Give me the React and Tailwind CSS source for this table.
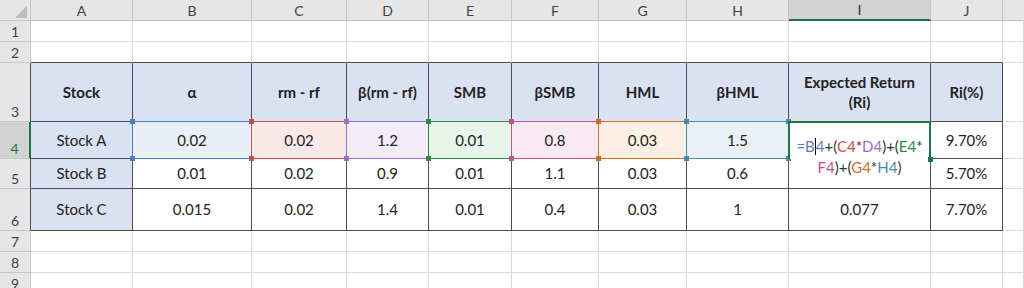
import React from 'react';

const COLS = ['A', 'B', 'C', 'D', 'E', 'F', 'G', 'H', 'I', 'J'];

const headers = ['Stock', 'α', 'rm - rf', 'β(rm - rf)', 'SMB', 'βSMB', 'HML', 'βHML', 'Expected Return\n(Ri)', 'Ri(%)'];

const rowB = ['Stock B', '0.01', '0.02', '0.9', '0.01', '1.1', '0.03', '0.6', '', '5.70%'];
const rowC = ['Stock C', '0.015', '0.02', '1.4', '0.01', '0.4', '0.03', '1', '0.077', '7.70%'];

// row 4 ranges referenced by the formula being edited
const ranges = [
  { v: '0.02', fill: 'bg-[#e9eff9]', line: 'border-[#4a7cc4]', sq: 'bg-[#4a7cc4]' },
  { v: '0.02', fill: 'bg-[#fbe9ea]', line: 'border-[#c0504d]', sq: 'bg-[#c0504d]' },
  { v: '1.2', fill: 'bg-[#f3edf9]', line: 'border-[#9b6fc7]', sq: 'bg-[#9b6fc7]' },
  { v: '0.01', fill: 'bg-[#e7f4e9]', line: 'border-[#2e8b3e]', sq: 'bg-[#2e8b3e]' },
  { v: '0.8', fill: 'bg-[#f9e9f3]', line: 'border-[#c0508f]', sq: 'bg-[#c0508f]' },
  { v: '0.03', fill: 'bg-[#fcefe4]', line: 'border-[#c8702a]', sq: 'bg-[#c8702a]' },
  { v: '1.5', fill: 'bg-[#e9f1f5]', line: 'border-[#4a8aa8]', sq: 'bg-[#4a8aa8]' },
];

const rowHead = 'bg-[#e6e6e6] border-r border-b border-[#c6c6c6] flex items-end justify-center text-[14px] leading-[18px] text-[#444]';
const gridCell = 'border-r border-b border-[#d9d9d9]';
const tableCell = 'border-r border-b border-[#4d4d4d] flex items-center justify-center text-center text-[15px]';

function RowHeader({ n, dark }) {
  if (n === 4) {
    return <div className="bg-[#d2d2d2] border-r-2 border-r-[#217346] border-b border-b-[#c6c6c6] flex items-end justify-center text-[14px] leading-[18px] text-[#217346]">4</div>;
  }
  return <div className={dark ? 'bg-[#e6e6e6] border-r border-b border-[#c6c6c6] border-r-[#4d4d4d] flex items-end justify-center text-[14px] leading-[18px] text-[#444]' : rowHead}>{n}</div>;
}

function EmptyRow({ n, darkBottom }) {
  return (
    <>
      <RowHeader n={n} />
      {COLS.map((c) => (
        <div key={c} className={darkBottom ? 'border-r border-r-[#d9d9d9] border-b border-b-[#4d4d4d]' : gridCell} />
      ))}
      <div className={gridCell} />
    </>
  );
}

function RangeCell({ r }) {
  return (
    <div className={`relative ${r.fill} ${tableCell}`}>
      {r.v}
      <div className={`absolute -left-px -top-px -right-px -bottom-px border ${r.line}`} />
      <div className={`absolute -left-[3px] -top-[3px] w-[5px] h-[5px] ${r.sq}`} />
      <div className={`absolute -right-[3px] -top-[3px] w-[5px] h-[5px] ${r.sq}`} />
      <div className={`absolute -left-[3px] -bottom-[3px] w-[5px] h-[5px] ${r.sq}`} />
      <div className={`absolute -right-[3px] -bottom-[3px] w-[5px] h-[5px] ${r.sq}`} />
    </div>
  );
}

function FormulaCell() {
  return (
    <div className="relative bg-white border-r border-r-[#4d4d4d]">
      <div className="absolute -left-px -top-px -right-px bottom-0 border-2 border-b-0 border-[#217346]" />
      <div className="absolute -right-[3px] -bottom-[3px] w-[5px] h-[5px] bg-[#217346]" />
      <div className="absolute left-0 right-0 top-[14px] text-center text-[15px] leading-[21px] text-[#333]">
        <div>
          <span className="text-[#5a7fb5]">=B</span>
          <span className="inline-block w-px h-[17px] bg-black align-[-3px]" />
          <span className="text-[#5a7fb5]">4</span>+(<span className="text-[#c0504d]">C4</span>*<span className="text-[#9b6fc7]">D4</span>)+(<span className="text-[#2e8b3e]">E4</span>*
        </div>
        <div>
          <span className="text-[#c0508f]">F4</span>)+(<span className="text-[#c8702a]">G4</span>*<span className="text-[#4a8aa8]">H4</span>)
        </div>
      </div>
    </div>
  );
}

function DataRow({ n, data }) {
  return (
    <>
      <RowHeader n={n} dark />
      {data.map((v, i) => (
        <div key={i} className={i === 0 ? `bg-[#d9e1f2] ${tableCell}` : tableCell}>{v}</div>
      ))}
      <div className={gridCell} />
    </>
  );
}

export default function App() {
  return (
    <div className="w-[1024px] h-[288px] overflow-hidden bg-white font-['Lato',sans-serif] text-[#222]">
      <div className="grid grid-cols-[31px_102px_119px_95px_82px_83px_87px_88px_102px_142px_72px_1fr] grid-rows-[21px_21px_21px_59px_37px_30px_42px_21px_21px_21px]">
        {/* column headers */}
        <div className="relative bg-[#e6e6e6] border-r border-b border-[#c6c6c6]">
          <svg className="absolute left-0 top-0" width="31" height="21" viewBox="0 0 31 21">
            <polygon points="27,6 27,18 15,18" fill="#bdbdbd" />
          </svg>
        </div>
        {COLS.map((c) =>
          c === 'I' ? (
            <div key={c} className="bg-[#d2d2d2] border-r border-r-[#c6c6c6] border-b-2 border-b-[#217346] flex items-center justify-center text-[14px] text-[#333]">{c}</div>
          ) : (
            <div key={c} className="bg-[#e6e6e6] border-r border-b border-[#c6c6c6] flex items-center justify-center text-[14px] text-[#444]">{c}</div>
          )
        )}
        <div className="bg-[#e6e6e6] border-b border-[#c6c6c6]" />

        <EmptyRow n={1} />
        <EmptyRow n={2} darkBottom />

        {/* row 3: headings */}
        <RowHeader n={3} dark />
        {headers.map((h, i) => (
          <div key={i} className={`bg-[#d9e1f2] font-bold whitespace-pre-line leading-[20px] ${tableCell}`}>{h}</div>
        ))}
        <div className={gridCell} />

        {/* row 4: formula being edited */}
        <RowHeader n={4} />
        <div className={`bg-[#d9e1f2] ${tableCell}`}>Stock A</div>
        {ranges.map((r, i) => (
          <RangeCell key={i} r={r} />
        ))}
        <FormulaCell />
        <div className={tableCell}>9.70%</div>
        <div className={gridCell} />

        {/* row 5: I5 hidden under the editor */}
        <RowHeader n={5} dark />
        {rowB.map((v, i) =>
          i === 8 ? (
            <div key={i} className="bg-white border-r border-b border-[#4d4d4d]" />
          ) : (
            <div key={i} className={i === 0 ? `bg-[#d9e1f2] ${tableCell}` : tableCell}>{v}</div>
          )
        )}
        <div className={gridCell} />

        <DataRow n={6} data={rowC} />
        <EmptyRow n={7} />
        <EmptyRow n={8} />
        <EmptyRow n={9} />
      </div>
    </div>
  );
}
